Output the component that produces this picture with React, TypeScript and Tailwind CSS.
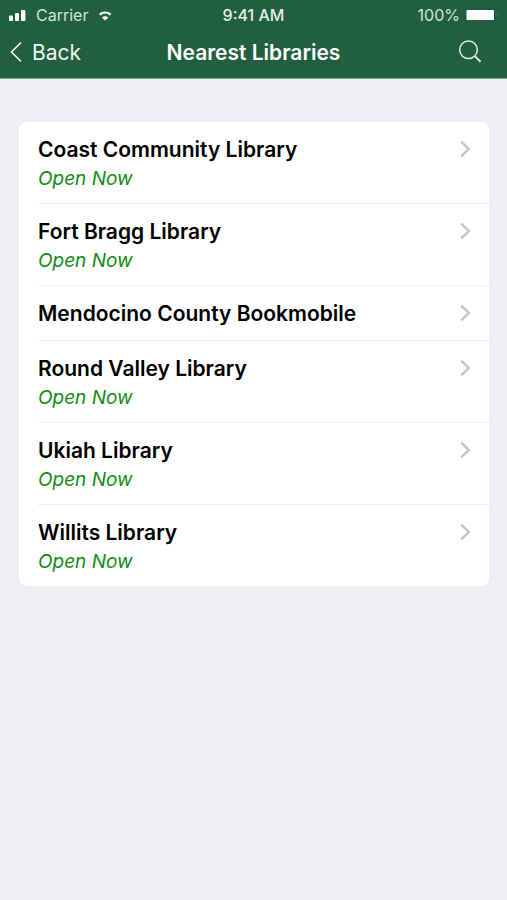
type Library = {
  id: string;
  name: string;
  status?: string;
};

const libraries: Library[] = [
  { id: "coast", name: "Coast Community Library", status: "Open Now" },
  { id: "fort-bragg", name: "Fort Bragg Library", status: "Open Now" },
  { id: "bookmobile", name: "Mendocino County Bookmobile" },
  { id: "round-valley", name: "Round Valley Library", status: "Open Now" },
  { id: "ukiah", name: "Ukiah Library", status: "Open Now" },
  { id: "willits", name: "Willits Library", status: "Open Now" },
];

const StatusBar: React.FC = () => {
  return (
    <div className="grid grid-cols-[1fr_auto_1fr] items-center h-[30px] px-2 text-base text-[#d3e3d8]">
      <div className="flex items-center">
        <svg width="18" height="14" viewBox="0 0 18 14" fill="#fff">
          <rect x="1" y="7.5" width="4" height="5.5" rx="1" />
          <rect x="7" y="5" width="4" height="8" rx="1" />
          <rect x="13" y="2" width="4.4" height="11" rx="1" />
        </svg>
        <span className="ml-2.5">Carrier</span>
        <svg className="ml-2.5" width="14" height="14" viewBox="0 0 14 14">
          <path
            d="M1.8 6.6 C4.6 3.8 9.8 3.8 12.6 6.6"
            fill="none"
            stroke="#fff"
            strokeWidth="2.2"
          />
          <path d="M4 9.6 Q7.2 7 10.4 9.6 L7.2 12.6 Z" fill="#fff" />
        </svg>
      </div>
      <span className="font-medium text-[#e4efe7]">9:41 AM</span>
      <div className="flex items-center justify-end">
        <span>100%</span>
        <svg className="ml-1.5" width="33" height="12" viewBox="0 0 33 12">
          <rect x="0.5" y="1" width="27.5" height="10" rx="1" fill="#fff" />
          <path d="M31 4 Q33 6 31 8 Z" fill="#3f7757" />
        </svg>
      </div>
    </div>
  );
};

const NavBar: React.FC = () => {
  return (
    <div className="grid grid-cols-[1fr_auto_1fr] items-center h-12 pb-0.5 px-2 text-white">
      <button className="flex items-center justify-self-start text-[21px] text-[#eef6f0]">
        <svg
          width="16"
          height="22"
          viewBox="0 0 16 22"
          fill="none"
          stroke="currentColor"
          strokeWidth="1.6"
        >
          <path d="M13 0.5 L3.5 10 L13 19.5" />
        </svg>
        <span className="ml-2">Back</span>
      </button>
      <h1 className="text-[21px] font-semibold">Nearest Libraries</h1>
      <button aria-label="Search" className="justify-self-end mr-4">
        <svg
          width="26"
          height="26"
          viewBox="0 0 26 26"
          fill="none"
          stroke="#e4efe7"
        >
          <circle cx="11.5" cy="9.8" r="8.8" strokeWidth="1.5" />
          <path d="M17.8 16.1 L23.6 21.9" strokeWidth="2" />
        </svg>
      </button>
    </div>
  );
};

const LibraryRow: React.FC<{ library: Library }> = ({ library }) => {
  return (
    <li className="group pl-[19px]">
      <a
        href={`#${library.id}`}
        className="flex items-start justify-between pt-3.5 pb-3 pr-4 border-b border-[#ededef] group-last:border-b-0"
      >
        <div>
          <h2 className="text-[21px] leading-7 font-semibold text-black">
            {library.name}
          </h2>
          {library.status && (
            <p className="mt-[3px] text-[19px] leading-6 italic text-[#138a16]">
              {library.status}
            </p>
          )}
        </div>
        <svg
          className="mt-1"
          width="16"
          height="18"
          viewBox="0 0 16 18"
          fill="none"
          stroke="#c4c4c6"
          strokeWidth="2.4"
        >
          <path d="M4.2 1.7 L11.8 9 L4.2 16.3" />
        </svg>
      </a>
    </li>
  );
};

const App: React.FC = () => {
  return (
    <div className="min-h-screen bg-[#efeef4] font-[Inter,'Liberation_Sans',sans-serif]">
      <header className="bg-[#225f3f] border-b border-[#7f9f8f]">
        <StatusBar />
        <NavBar />
      </header>

      <main className="pl-[19px] pr-[18px] pt-[43px] pb-6">
        <ul className="bg-white rounded-lg overflow-hidden">
          {libraries.map((library) => (
            <LibraryRow key={library.id} library={library} />
          ))}
        </ul>
      </main>
    </div>
  );
};

export default App;
